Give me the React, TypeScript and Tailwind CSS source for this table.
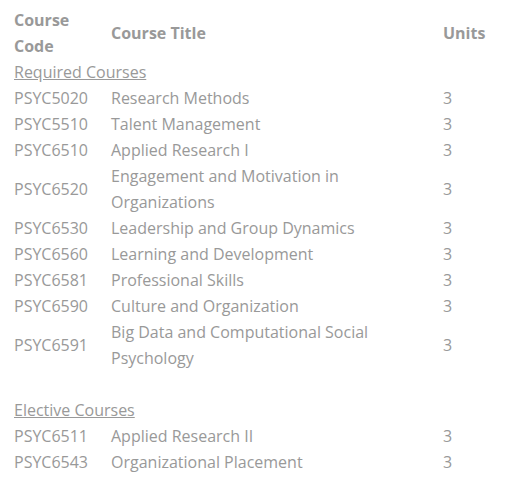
import React from 'react';

type Row = { code: string; title: string; units: number };

const required: Row[] = [
  { code: 'PSYC5020', title: 'Research Methods', units: 3 },
  { code: 'PSYC5510', title: 'Talent Management', units: 3 },
  { code: 'PSYC6510', title: 'Applied Research I', units: 3 },
  { code: 'PSYC6520', title: 'Engagement and Motivation in Organizations', units: 3 },
  { code: 'PSYC6530', title: 'Leadership and Group Dynamics', units: 3 },
  { code: 'PSYC6560', title: 'Learning and Development', units: 3 },
  { code: 'PSYC6581', title: 'Professional Skills', units: 3 },
  { code: 'PSYC6590', title: 'Culture and Organization', units: 3 },
  { code: 'PSYC6591', title: 'Big Data and Computational Social Psychology', units: 3 },
];

const elective: Row[] = [
  { code: 'PSYC6511', title: 'Applied Research II', units: 3 },
  { code: 'PSYC6543', title: 'Organizational Placement', units: 3 },
];

function CourseRow({ r }: { r: Row }) {
  return (
    <tr>
      <td className="align-middle">{r.code}</td>
      <td className="align-middle pr-[40px]">{r.title}</td>
      <td className="align-middle">{r.units}</td>
    </tr>
  );
}

export default function App() {
  return (
    <div className="bg-white min-h-[494px] pl-[14px] pt-[7px] font-['Open_Sans',sans-serif] text-[16px] leading-[26px] text-[#999999]">
      <table className="table-fixed border-collapse w-[480px]">
        <colgroup>
          <col className="w-[97px]" />
          <col className="w-[332px]" />
          <col />
        </colgroup>
        <thead>
          <tr className="font-bold text-left">
            <th className="align-middle font-bold">Course Code</th>
            <th className="align-middle font-bold">Course Title</th>
            <th className="align-middle font-bold">Units</th>
          </tr>
        </thead>
        <tbody>
          <tr><td colSpan={3} className="underline">Required Courses</td></tr>
          {required.map(r => <CourseRow key={r.code} r={r} />)}
          <tr><td colSpan={3} className="h-[26px]"></td></tr>
          <tr><td colSpan={3} className="underline">Elective Courses</td></tr>
          {elective.map(r => <CourseRow key={r.code} r={r} />)}
        </tbody>
      </table>
    </div>
  );
}
